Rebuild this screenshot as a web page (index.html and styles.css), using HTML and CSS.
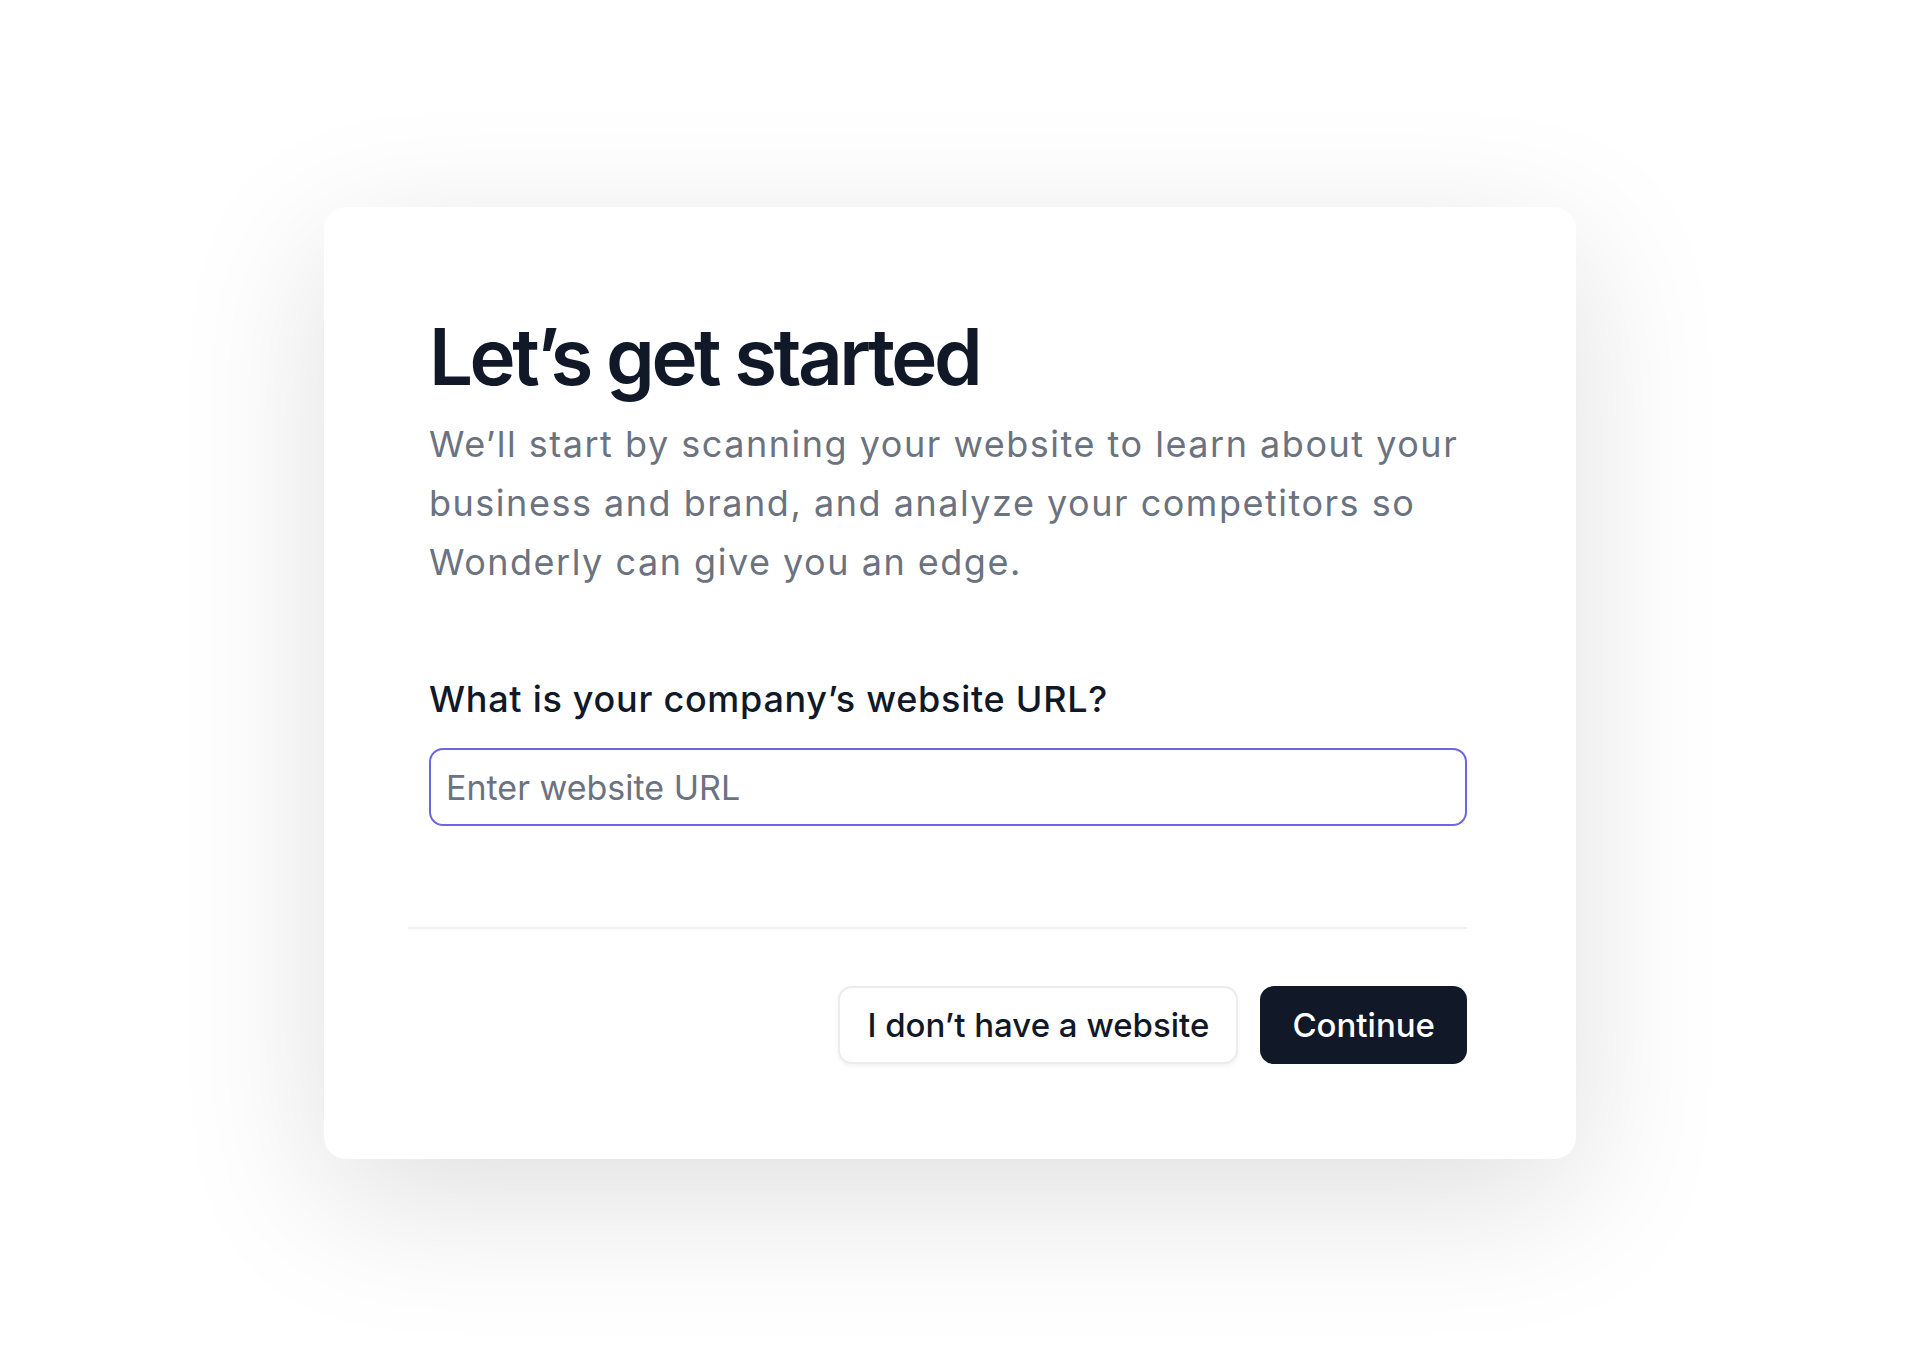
FILE: index.html
```html
<!DOCTYPE html>
<html>
<head>
    <title>Let's get started</title>
    <link rel="stylesheet" href="styles.css">
</head>
<body>
    <div class="card">
        <div class="card-body">
            <h1>Let’s get started</h1>
            <p class="intro">We’ll start by scanning your website to learn about your business and brand, and analyze your competitors so Wonderly can give you an edge.</p>

            <label for="websiteUrl" class="field-label">What is your company’s website URL?</label>
            <input type="text" id="websiteUrl" class="url-input" placeholder="Enter website URL" autofocus>
        </div>

        <div class="card-footer">
            <button class="btn btn-secondary">I don’t have a website</button>
            <button class="btn btn-primary">Continue</button>
        </div>
    </div>
</body>
</html>
```

FILE: styles.css
```css
* {
    box-sizing: border-box;
}

body {
    font-family: 'Inter', 'Noto Sans', sans-serif;
    margin: 0;
    min-height: 1350px;
    padding: 16px 20px 0 0;
    display: flex;
    align-items: center;
    justify-content: center;
    background: #fff;
}

.card {
    width: 1252px;
    height: 952px;
    background: #fff;
    border-radius: 22px;
    box-shadow: 0 40px 150px rgba(0,0,0,0.13);
    padding: 111px 109px 0 84px;
}

.card-body {
    padding-left: 21px;
}

h1 {
    color: #111827;
    font-size: 78px;
    font-weight: 600;
    line-height: 1;
    letter-spacing: -0.045em;
    margin: 0 0 19px;
}

.intro {
    color: #6b7280;
    font-size: 36px;
    line-height: 59px;
    letter-spacing: 0.042em;
    margin: 0 0 85px;
}

.field-label {
    display: block;
    color: #111827;
    font-size: 36px;
    font-weight: 500;
    line-height: 44px;
    letter-spacing: 0.02em;
    margin-bottom: 27px;
}

.url-input {
    display: block;
    width: 100%;
    height: 78px;
    padding: 0 15px;
    border: 2px solid #6b67e0;
    border-radius: 14px;
    font-family: inherit;
    font-size: 34px;
    color: #111827;
    outline: none;
}

.url-input::placeholder {
    color: #6b7280;
}

.card-footer {
    margin-top: 101px;
    border-top: 2px solid #f1f1f2;
    padding-top: 57px;
    display: flex;
    justify-content: flex-end;
    gap: 22px;
}

.btn {
    height: 78px;
    border-radius: 14px;
    font-family: inherit;
    font-size: 33px;
    font-weight: 500;
    cursor: pointer;
}

.btn-secondary {
    padding: 0 27px;
    background: #fff;
    color: #111827;
    border: 2px solid #ebebf0;
    box-shadow: 0 2px 4px rgba(0,0,0,0.06);
}

.btn-primary {
    padding: 0 32px;
    background: #111827;
    color: #fff;
    border: none;
}
```
